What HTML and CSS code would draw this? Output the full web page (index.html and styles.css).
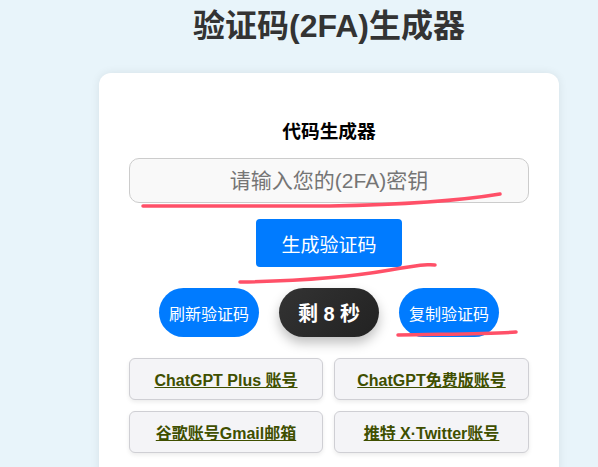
FILE: index.html
```html
<!DOCTYPE html>
<html lang="zh-CN">
<head>
<meta charset="utf-8">
<title>验证码(2FA)生成器</title>
<link rel="stylesheet" href="styles.css">
</head>
<body>
<div class="wrap">
  <h1 class="title">验证码(2FA)生成器</h1>
  <div class="card">
    <h2 class="subtitle">代码生成器</h2>
    <input class="secret" type="text" placeholder="请输入您的(2FA)密钥">
    <button class="gen-btn">生成验证码</button>
    <div class="actions">
      <button class="pill">刷新验证码</button>
      <div class="timer">剩 8 秒</div>
      <button class="pill">复制验证码</button>
    </div>
    <div class="links">
      <a class="link" href="#">ChatGPT Plus 账号</a>
      <a class="link" href="#">ChatGPT免费版账号</a>
      <a class="link" href="#">谷歌账号Gmail邮箱</a>
      <a class="link" href="#">推特 X·Twitter账号</a>
    </div>
  </div>
</div>
<svg class="marks" width="598" height="467" viewBox="0 0 598 467">
  <path d="M143 206 L330 206 Q440 204 500 194" />
  <path d="M240 282 C300 281 350 277 390 270 S425 265 435 265" />
  <path d="M398 335 C440 334 490 334 516 332" />
</svg>
</body>
</html>
```
FILE: styles.css
```css
html, body {
  margin: 0;
  padding: 0;
}
body {
  background: #e8f4fa;
  font-family: "Liberation Sans", "Noto Sans CJK SC", sans-serif;
  height: 467px;
  overflow: hidden;
  position: relative;
}
.wrap {
  margin-left: 99px;
  width: 460px;
}
.title {
  margin: 0;
  padding-top: 8px;
  font-size: 32px;
  line-height: 36px;
  font-weight: bold;
  color: #333;
  text-align: center;
}
.card {
  margin-top: 29px;
  background: #fff;
  border-radius: 12px;
  box-shadow: 0 0 10px rgba(0, 0, 0, 0.08);
  padding: 47px 30px 0;
  display: flex;
  flex-direction: column;
  align-items: center;
  height: 410px;
  box-sizing: border-box;
}
.subtitle {
  margin: 0 0 14px;
  font-size: 18.72px;
  line-height: 24px;
  font-weight: bold;
  color: #000;
}
.secret {
  width: 400px;
  height: 45px;
  box-sizing: border-box;
  border: 1px solid #ccc;
  border-radius: 10px;
  background: #f9f9f9;
  font-family: inherit;
  font-size: 21px;
  text-align: center;
  outline: none;
}
.secret::placeholder {
  color: #757575;
}
.gen-btn {
  margin-top: 16px;
  width: 146px;
  height: 48px;
  border: none;
  border-radius: 4px;
  background: #007bff;
  color: #fff;
  font-family: inherit;
  font-size: 19px;
}
.actions {
  margin-top: 21px;
  display: flex;
  gap: 20px;
}
.pill {
  width: 100px;
  height: 49px;
  border: none;
  border-radius: 25px;
  background: #007bff;
  color: #fff;
  font-family: inherit;
  font-size: 16px;
  padding: 0;
}
.timer {
  width: 100px;
  height: 49px;
  border-radius: 25px;
  background: linear-gradient(135deg, #333, #222);
  color: #fff;
  font-size: 20px;
  font-weight: bold;
  display: flex;
  align-items: center;
  justify-content: center;
  box-shadow: 0 6px 12px rgba(0, 0, 0, 0.25);
}
.links {
  margin-top: 21px;
  width: 400px;
  display: grid;
  grid-template-columns: 194px 195px;
  column-gap: 11px;
  row-gap: 11px;
}
.link {
  height: 42px;
  box-sizing: border-box;
  display: flex;
  align-items: center;
  justify-content: center;
  background: #f4f4f7;
  border: 1px solid #cfcfd4;
  border-radius: 6px;
  box-shadow: 0 2px 4px rgba(0, 0, 0, 0.08);
  color: #3f4f00;
  font-size: 16px;
  font-weight: bold;
  text-decoration: underline;
}
.marks {
  position: absolute;
  left: 0;
  top: 0;
  pointer-events: none;
}
.marks path {
  fill: none;
  stroke: #ff5068;
  stroke-width: 3.5;
  stroke-linecap: round;
}
```
